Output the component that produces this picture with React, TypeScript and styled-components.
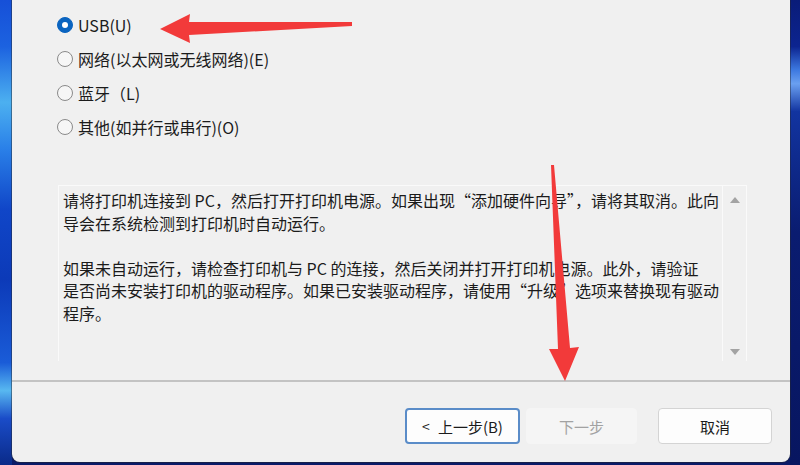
import styled, { createGlobalStyle } from 'styled-components';

const GlobalStyle = createGlobalStyle`
  html, body {
    margin: 0;
    padding: 0;
  }
  body {
    width: 800px;
    height: 465px;
    overflow: hidden;
    font-family: "Noto Sans CJK SC", "Noto Sans", sans-serif;
  }
`;

const options = [
  { label: 'USB(U)', checked: true },
  { label: '网络(以太网或无线网络)(E)', checked: false },
  { label: '蓝牙（L)', checked: false },
  { label: '其他(如并行或串行)(O)', checked: false },
];

const helpLines = [
  '请将打印机连接到 PC，然后打开打印机电源。如果出现“添加硬件向导”，请将其取消。此向',
  '导会在系统检测到打印机时自动运行。',
  '',
  '如果未自动运行，请检查打印机与 PC 的连接，然后关闭并打开打印机电源。此外，请验证',
  '是否尚未安装打印机的驱动程序。如果已安装驱动程序，请使用“升级”选项来替换现有驱动',
  '程序。',
];

const App = () => {
  return (
    <Page>
      <GlobalStyle />
      <Dialog>
        <Body>
          <RadioGroup>
            {options.map((o) => (
              <RadioRow key={o.label}>
                <RadioCircle $checked={o.checked} />
                <RadioLabel>{o.label}</RadioLabel>
              </RadioRow>
            ))}
          </RadioGroup>
          <HelpBox>
            <HelpText>
              {helpLines.map((line, i) => (
                <HelpLine key={i}>{line || '\u00a0'}</HelpLine>
              ))}
            </HelpText>
            <ScrollBar>
              <ScrollArrow $down={false} />
              <ScrollArrow $down />
            </ScrollBar>
          </HelpBox>
        </Body>
        <Divider />
        <Footer>
          <Button $variant="focus" $width={115}>
            <span>&lt;</span> 上一步(B)
          </Button>
          <Button $variant="disabled" $width={111}>
            下一步
          </Button>
          <CancelButton $variant="normal" $width={114}>
            取消
          </CancelButton>
        </Footer>
      </Dialog>
      <Arrows width="800" height="465" viewBox="0 0 800 465">
        <polygon
          points="160,29 190,14 189,22 352,22 352,26 189,35 190,43"
          fill="#f23a3a"
        />
        <polygon
          points="551,165 554,165 570,348 579,347 565,381 549,349 558,349"
          fill="#f23a3a"
        />
      </Arrows>
    </Page>
  );
};

const Page = styled.div`
  position: relative;
  width: 800px;
  height: 465px;
  box-sizing: border-box;
  display: flex;
  padding: 0 10px 3px 12px;
  background:
    linear-gradient(
        180deg,
        #1650d8 0%,
        #1c62e0 10%,
        #4cb0f0 22%,
        #2a80e8 32%,
        #1046c8 45%,
        #0c3ab8 60%,
        #1a5cd8 78%,
        #58b8f0 84%,
        #1a4cc8 90%,
        #0a2a88 100%
      )
      left top / 12px 100% no-repeat,
    linear-gradient(
        180deg,
        #0a1c78 0%,
        #0c2490 10%,
        #3c78e0 15%,
        #6aa0f0 18%,
        #1234a0 24%,
        #0a1c70 50%,
        #081660 100%
      )
      right top / 10px 100% no-repeat,
    #0a1a68;
`;

const Dialog = styled.div`
  flex: 1;
  display: flex;
  flex-direction: column;
  background: #f0f0f0;
  border-radius: 0 0 8px 8px;
  box-shadow: 0 0 0 1px rgba(40, 40, 40, 0.45);
`;

const Body = styled.div`
  flex: 1;
  display: flex;
  flex-direction: column;
  padding: 8px 43px 0 45px;
`;

const RadioGroup = styled.div`
  display: flex;
  flex-direction: column;
`;

const RadioRow = styled.div`
  height: 34px;
  display: flex;
  align-items: center;
  gap: 5px;
`;

const RadioCircle = styled.span<{ $checked: boolean }>`
  width: 16px;
  height: 16px;
  border-radius: 50%;
  box-sizing: border-box;
  flex-shrink: 0;
  display: flex;
  align-items: center;
  justify-content: center;
  background: ${(p) => (p.$checked ? '#0a64c0' : '#f6f6f6')};
  border: 1px solid ${(p) => (p.$checked ? '#0a64c0' : '#8a8a8a')};
  &::after {
    content: '';
    display: ${(p) => (p.$checked ? 'block' : 'none')};
    width: 6px;
    height: 6px;
    border-radius: 50%;
    background: #ffffff;
  }
`;

const RadioLabel = styled.span`
  font-size: 16px;
  line-height: 22px;
  color: #1b1b1b;
  white-space: nowrap;
`;

const HelpBox = styled.div`
  margin-top: 41px;
  margin-left: 1px;
  height: 175px;
  display: flex;
  border-top: 1px solid #fafafa;
  border-left: 1px solid #fafafa;
`;

const HelpText = styled.div`
  flex: 1;
  overflow: hidden;
  padding: 3px 0 0 4px;
`;

const HelpLine = styled.div`
  font-size: 16px;
  line-height: 22.5px;
  color: #1b1b1b;
  white-space: nowrap;
`;

const ScrollBar = styled.div`
  width: 23px;
  display: flex;
  flex-direction: column;
  align-items: center;
  justify-content: space-between;
  padding: 11px 0 6px;
  border-left: 1px solid #fafafa;
  border-right: 1px solid #fafafa;
`;

const ScrollArrow = styled.span<{ $down: boolean }>`
  width: 0;
  height: 0;
  border-left: 5px solid transparent;
  border-right: 5px solid transparent;
  ${(p) =>
    p.$down ? 'border-top: 6px solid #a3a3a3;' : 'border-bottom: 6px solid #a3a3a3;'}
`;

const Divider = styled.div`
  height: 2px;
  background: #c3c3c3;
`;

const Footer = styled.div`
  height: 80px;
  box-sizing: border-box;
  display: flex;
  justify-content: flex-end;
  align-items: flex-start;
  gap: 6px;
  padding: 26px 18px 0 0;
`;

const Button = styled.div<{ $variant: 'focus' | 'disabled' | 'normal'; $width: number }>`
  width: ${(p) => p.$width}px;
  height: 36px;
  box-sizing: border-box;
  display: flex;
  align-items: center;
  justify-content: center;
  gap: 4px;
  border-radius: 4px;
  font-size: 15px;
  background: ${(p) => (p.$variant === 'disabled' ? '#f5f5f5' : '#fdfdfd')};
  color: ${(p) => (p.$variant === 'disabled' ? '#a2a2a2' : '#1b1b1b')};
  border: ${(p) =>
    p.$variant === 'focus'
      ? '2px solid #5a8cc8'
      : p.$variant === 'normal'
      ? '1px solid #d4d4d4'
      : '1px solid #f5f5f5'};
  span {
    font-size: 14px;
    margin-right: 4px;
  }
`;

const CancelButton = styled(Button)`
  margin-left: 15px;
`;

const Arrows = styled.svg`
  position: absolute;
  top: 0;
  left: 0;
  pointer-events: none;
`;

export default App;
